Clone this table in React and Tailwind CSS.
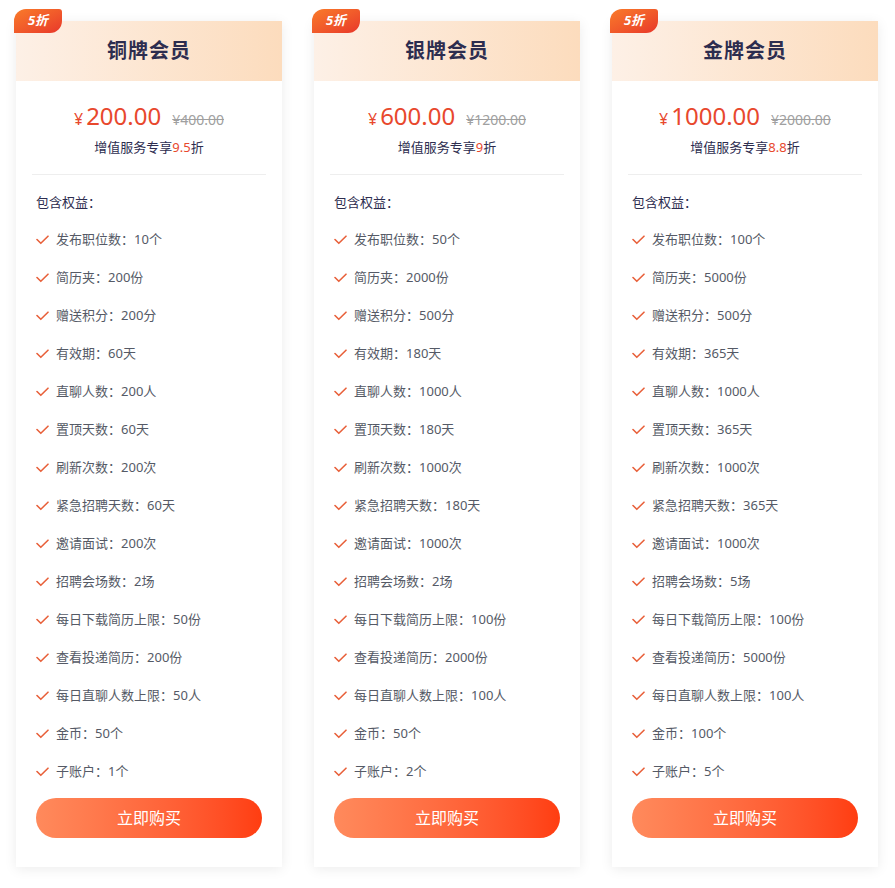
import React from 'react';

const plans = [
  {
    name: '铜牌会员',
    price: '200.00',
    origin: '400.00',
    discount: '9.5',
    items: [
      ['发布职位数', '10个'],
      ['简历夹', '200份'],
      ['赠送积分', '200分'],
      ['有效期', '60天'],
      ['直聊人数', '200人'],
      ['置顶天数', '60天'],
      ['刷新次数', '200次'],
      ['紧急招聘天数', '60天'],
      ['邀请面试', '200次'],
      ['招聘会场数', '2场'],
      ['每日下载简历上限', '50份'],
      ['查看投递简历', '200份'],
      ['每日直聊人数上限', '50人'],
      ['金币', '50个'],
      ['子账户', '1个'],
    ],
  },
  {
    name: '银牌会员',
    price: '600.00',
    origin: '1200.00',
    discount: '9',
    items: [
      ['发布职位数', '50个'],
      ['简历夹', '2000份'],
      ['赠送积分', '500分'],
      ['有效期', '180天'],
      ['直聊人数', '1000人'],
      ['置顶天数', '180天'],
      ['刷新次数', '1000次'],
      ['紧急招聘天数', '180天'],
      ['邀请面试', '1000次'],
      ['招聘会场数', '2场'],
      ['每日下载简历上限', '100份'],
      ['查看投递简历', '2000份'],
      ['每日直聊人数上限', '100人'],
      ['金币', '50个'],
      ['子账户', '2个'],
    ],
  },
  {
    name: '金牌会员',
    price: '1000.00',
    origin: '2000.00',
    discount: '8.8',
    items: [
      ['发布职位数', '100个'],
      ['简历夹', '5000份'],
      ['赠送积分', '500分'],
      ['有效期', '365天'],
      ['直聊人数', '1000人'],
      ['置顶天数', '365天'],
      ['刷新次数', '1000次'],
      ['紧急招聘天数', '365天'],
      ['邀请面试', '1000次'],
      ['招聘会场数', '5场'],
      ['每日下载简历上限', '100份'],
      ['查看投递简历', '5000份'],
      ['每日直聊人数上限', '100人'],
      ['金币', '100个'],
      ['子账户', '5个'],
    ],
  },
];

const Check = () => (
  <svg className="w-[13px] h-[10px] shrink-0" viewBox="0 0 13 10" fill="none">
    <path d="M1 4.5l3.8 3.8L12 1.2" stroke="#e8603a" strokeWidth="1.6" strokeLinecap="round" strokeLinejoin="round" />
  </svg>
);

const PlanCard = ({ plan }) => (
  <div className="relative w-[266px] h-[846px] bg-white shadow-[0_2px_12px_rgba(0,0,0,0.08)] flex flex-col">
    {/* discount badge */}
    <div className="absolute -left-[2px] -top-[12px] w-[48px] h-[24px] rounded-tl-[12px] rounded-br-[12px] rounded-tr-[3px] bg-gradient-to-br from-[#f97a2a] to-[#e8352a] flex items-center justify-center text-white text-[13px] font-bold italic z-10">
      5折
    </div>

    <div className="h-[60px] bg-gradient-to-r from-[#fdf0e6] to-[#fcdcbd] flex items-center justify-center">
      <h3 className="text-[20px] font-bold text-[#2d2d4f] tracking-[1px]">{plan.name}</h3>
    </div>

    <div className="mx-4 border-b border-[#eeeeee] pt-[20px] pb-[18px] flex flex-col items-center">
      <div className="flex items-baseline">
        <span className="text-[#e8482d] text-[16px] mr-[3px]">¥</span>
        <span className="text-[#e8482d] text-[24px] leading-[30px]">{plan.price}</span>
        <span className="text-[#a0a0a0] text-[14px] ml-[11px] line-through">¥{plan.origin}</span>
      </div>
      <p className="text-[13px] text-[#2d2d4f] mt-[7px] leading-[18px]">
        增值服务专享<span className="text-[#e8482d]">{plan.discount}</span>折
      </p>
    </div>

    <div className="px-5 pt-[17px]">
      <p className="text-[13px] text-[#2d2d4f] leading-[20px]">包含权益：</p>
      <ul className="mt-[18px] flex flex-col gap-[18px]">
        {plan.items.map(([k, v]) => (
          <li key={k} className="flex items-center gap-[7px] h-[20px] text-[13px] text-[#555a66]">
            <Check />
            <span>{k}：{v}</span>
          </li>
        ))}
      </ul>
    </div>

    <div className="px-5 mt-[16px]">
      <button className="w-full h-[40px] rounded-full bg-gradient-to-r from-[#ff8a5c] to-[#ff3d10] text-white text-[16px]">
        立即购买
      </button>
    </div>
  </div>
);

export default function App() {
  return (
    <div
      className="min-h-screen bg-white pt-[21px] pl-4 flex gap-8"
      style={{ fontFamily: '"Noto Sans", "Noto Sans CJK SC", sans-serif' }}
    >
      {plans.map((p) => (
        <PlanCard key={p.name} plan={p} />
      ))}
    </div>
  );
}
